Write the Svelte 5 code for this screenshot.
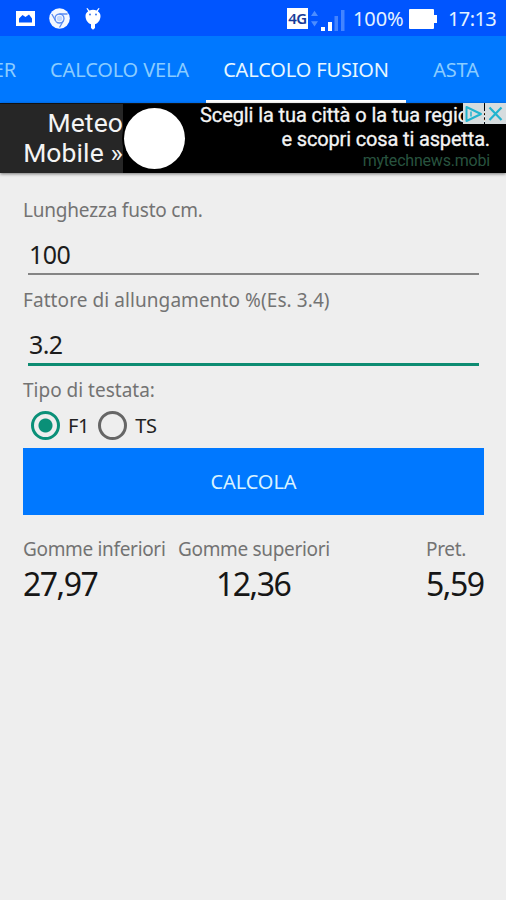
<script lang="ts">
	interface Field {
		id: string;
		label: string;
		value: string;
	}

	const tabs = ['TIMER', 'CALCOLO VELA', 'CALCOLO FUSION', 'ASTA'];
	const heads = ['F1', 'TS'];

	let activeTab = $state('CALCOLO FUSION');
	let head = $state('F1');
	let focused = $state('stretch');
	let fields: Field[] = $state([
		{ id: 'length', label: 'Lunghezza fusto cm.', value: '100' },
		{ id: 'stretch', label: 'Fattore di allungamento %(Es. 3.4)', value: '3.2' }
	]);
	let results = $state([
		{ label: 'Gomme inferiori', value: '27,97' },
		{ label: 'Gomme superiori', value: '12,36' },
		{ label: 'Pret.', value: '5,59' }
	]);
</script>

<div class="screen">
	<header class="status-bar">
		<div class="notifications">
			<svg width="19" height="15" viewBox="0 0 19 15">
				<path fill="#fff" fill-rule="evenodd" d="M0 0h19v15H0zM3 11.500h13V7.500L13 3.500 9.500 6 6.500 4 3 7.500z" />
			</svg>
			<svg width="21" height="21" viewBox="0 0 21 21">
				<circle cx="10.5" cy="10.5" r="10.3" fill="#f4f8ff" />
				<g fill="none" stroke="#5a8cf2" stroke-width="1.3">
					<circle cx="10.5" cy="10.5" r="4.5" />
					<path d="M10.5 6h8M6.6 12.7 2.8 6M14.4 12.7 10.500 19.500" />
				</g>
				<circle cx="10.5" cy="10.5" r="2.7" fill="#c4d8fc" />
			</svg>
			<svg width="16" height="22" viewBox="0 0 16 22">
				<path fill="#fff" d="M.5 8C.5 6 1.600 4.200 3.200 3.200L1.400.6l1-.6 2 2.500Q8 1.200 11.600 2.500l2-2.500 1 .6-1.800 2.600c1.600 1 2.700 2.800 2.700 4.800 0 4-2.500 7.500-5.500 8.200V20L8 21.800 6 20v-3.800C3 15.500.5 12 .5 8z" />
				<circle cx="5" cy="6.500" r="1" fill="#3d78ee" />
				<circle cx="11" cy="6.500" r="1" fill="#3d78ee" />
			</svg>
		</div>
		<div class="system">
			<span class="network">4G</span>
			<svg class="arrows" width="7" height="17" viewBox="0 0 8 18">
				<path fill="#4c8dff" d="M4 0l4 6H0zM0 12h8l-4 6z" />
			</svg>
			<svg class="signal" width="24" height="22" viewBox="0 0 24 22">
				<path fill="#fff" d="M0 18h4v4H0zM7 13h4v9H7z" />
				<path fill="#4384ff" d="M13.500 7h3.500v15h-3.500zM20 1h3.500v21H20z" />
			</svg>
			<span class="percent">100%</span>
			<svg class="battery" width="28" height="20" viewBox="0 0 28 20">
				<path fill="#fff" d="M1 0h23q1 0 1 1v5h3v8h-3v5q0 1-1 1H1q-1 0-1-1V1q0-1 1-1z" />
			</svg>
			<span class="clock">17:13</span>
		</div>
	</header>

	<nav class="tabs">
		{#each tabs as tab}
			<button class="tab" class:active={activeTab === tab} onclick={() => (activeTab = tab)}>{tab}</button>
		{/each}
	</nav>

	<aside class="ad">
		<div class="ad-title">
			<span>Meteo</span>
			<span>Mobile »</span>
		</div>
		<div class="ad-logo"></div>
		<div class="ad-text">
			<span class="ad-line first">Scegli la tua città o la tua regione</span>
			<span class="ad-line">e scopri cosa ti aspetta.</span>
			<span class="ad-url">mytechnews.mobi</span>
		</div>
		<div class="ad-choices">
			<svg width="21" height="21" viewBox="0 0 21 21">
				<path d="M3.500 4v14L18 11z" fill="none" stroke="#20b4cf" stroke-width="2" stroke-linejoin="round" />
				<path d="M8 8.500v5" fill="none" stroke="#20b4cf" stroke-width="1.500" />
			</svg>
			<svg width="21" height="21" viewBox="0 0 21 21">
				<path d="M4.500 4.500l12 12.500M16.500 4.500L4.500 17" stroke="#20b4cf" stroke-width="2.200" />
			</svg>
		</div>
	</aside>

	<main>
		{#each fields as field (field.id)}
			<label class="field">
				<span class="label {field.id}">{field.label}</span>
				<input
					type="text"
					class:focused={focused === field.id}
					bind:value={field.value}
					onfocus={() => (focused = field.id)}
				/>
			</label>
		{/each}

		<span class="label">Tipo di testata:</span>
		<div class="radios">
			{#each heads as option}
				<button class="radio" onclick={() => (head = option)}>
					<span class="ring" class:checked={head === option}></span>
					<span>{option}</span>
				</button>
			{/each}
		</div>

		<button class="submit">CALCOLA</button>

		<div class="results">
			{#each results as result}
				<div class="result">
					<span class="label">{result.label}</span>
					<span class="value">{result.value}</span>
				</div>
			{/each}
		</div>
	</main>
</div>

<style>
	:global(body) {
		background: #eee;
	}

	.screen {
		width: 506px;
		height: 900px;
		overflow: hidden;
		background: #eee;
		font-family: 'Noto Sans', 'Open Sans', sans-serif;
	}

	button {
		padding: 0;
		border: 0;
		background: none;
		font-family: inherit;
		white-space: nowrap;
	}

	svg {
		display: block;
		flex-shrink: 0;
	}

	.status-bar {
		display: flex;
		align-items: center;
		justify-content: space-between;
		height: 36px;
		padding: 1px 10px 0 16px;
		box-sizing: border-box;
		background: #0055ff;
		color: #e4f2ff;
		font-size: 20px;
		line-height: 35px;
	}

	.notifications,
	.system {
		display: flex;
		align-items: center;
	}

	.notifications {
		gap: 14px;
	}

	.notifications svg:last-child {
		margin-left: 1px;
	}

	.network {
		width: 21px;
		height: 21px;
		background: #fff;
		color: #163b9a;
		font-size: 15px;
		font-weight: 600;
		line-height: 21px;
		text-align: center;
		letter-spacing: -0.5px;
	}

	.arrows {
		margin-left: 3px;
	}

	.signal {
		margin: 3px 0 0 3px;
	}

	.percent {
		width: 51px;
		margin-left: 8px;
		letter-spacing: -0.1px;
	}

	.battery {
		margin-left: 5px;
	}

	.clock {
		width: 48px;
		margin-left: 11px;
		letter-spacing: -0.6px;
	}

	.tabs {
		display: flex;
		justify-content: flex-end;
		height: 67px;
		background: #0078ff;
	}

	.tab {
		flex-shrink: 0;
		box-sizing: border-box;
		height: 67px;
		padding: 3px 17px 0;
		border-bottom: 3px solid transparent;
		color: #8accff;
		font-size: 20px;
		letter-spacing: -0.15px;
	}

	.tab:nth-child(2) {
		width: 173px;
	}

	.tab.active {
		width: 200px;
		border-bottom-color: #fff;
		color: #e8f7ff;
		letter-spacing: -0.15px;
	}

	.tab:last-child {
		width: 100px;
	}

	.ad {
		position: relative;
		display: flex;
		height: 69px;
		border-top: 1px solid #111;
		background: #000;
		box-shadow: 0 1px 3px rgba(0, 0, 0, 0.5);
		color: #f4f4f4;
		font-family: Roboto, sans-serif;
		white-space: nowrap;
	}

	.ad-title {
		display: flex;
		flex-direction: column;
		flex-shrink: 0;
		align-items: flex-end;
		width: 123px;
		padding-top: 4px;
		box-sizing: border-box;
		background: #262626;
		font-size: 26.5px;
		line-height: 30px;
		letter-spacing: 0.1px;
	}

	.ad-logo {
		flex-shrink: 0;
		width: 61px;
		height: 61px;
		margin: 4px 0 0 1px;
		border-radius: 50%;
		background: #fff;
		box-shadow: 0 0 0 2px #000;
	}

	.ad-text {
		display: flex;
		flex: 1;
		min-width: 0;
		flex-direction: column;
		align-items: flex-end;
		padding-right: 16px;
		font-size: 20px;
		line-height: 24px;
		letter-spacing: -0.15px;
		-webkit-text-stroke: 0.3px;
	}

	.ad-line.first {
		align-self: flex-start;
		margin: -1px 0 0 15px;
		letter-spacing: -0.1px;
	}

	.ad-url {
		color: #28533f;
		font-size: 16px;
		line-height: 20px;
		letter-spacing: -0.2px;
		-webkit-text-stroke: 0;
	}

	.ad-choices {
		position: absolute;
		top: -1px;
		right: 0;
		display: flex;
		gap: 1px;
	}

	.ad-choices svg {
		background: #d6dcde;
	}

	main {
		display: flex;
		flex-direction: column;
		padding: 24px 22px 0 23px;
	}

	.field {
		display: flex;
		flex-direction: column;
		height: 90px;
	}

	.label {
		color: #737373;
		font-size: 19px;
		line-height: 26px;
		white-space: nowrap;
	}

	.label.length {
		letter-spacing: -0.2px;
	}

	.label.stretch {
		letter-spacing: 0.08px;
	}

	input {
		box-sizing: border-box;
		height: 52px;
		margin: 0 5px;
		padding: 14px 1px 2px;
		border: 0;
		border-bottom: 2px solid #848484;
		border-radius: 0;
		outline: none;
		background: none;
		color: #1c1c1c;
		font-family: inherit;
		font-size: 25px;
		letter-spacing: -0.6px;
	}

	input.focused {
		height: 53px;
		border-bottom: 3px solid #0d8c72;
	}

	.radios {
		display: flex;
		gap: 9px;
		height: 45px;
		padding: 0 0 0 8px;
		box-sizing: border-box;
	}

	.radio {
		display: flex;
		align-items: center;
		gap: 8px;
		color: #222;
		font-size: 20px;
		letter-spacing: -0.3px;
	}

	.ring {
		box-sizing: border-box;
		width: 29px;
		height: 29px;
		border: 3px solid #666;
		border-radius: 50%;
	}

	.ring.checked {
		border-color: #0a9078;
		background: radial-gradient(circle, #0a9078 6.500px, transparent 7.500px);
	}

	.submit {
		height: 67px;
		background: #0078ff;
		color: #d8f2ff;
		font-size: 20px;
		letter-spacing: -0.1px;
	}

	.results {
		display: grid;
		grid-template-columns: 155px 1fr 58px;
		padding-top: 21px;
	}

	.result {
		display: flex;
		flex-direction: column;
	}

	.result .label {
		letter-spacing: -0.33px;
	}

	.value {
		color: #161616;
		font-size: 32px;
		line-height: 43px;
		letter-spacing: -1.5px;
	}

	.result:nth-child(2) .value {
		margin-left: 38px;
	}
</style>
